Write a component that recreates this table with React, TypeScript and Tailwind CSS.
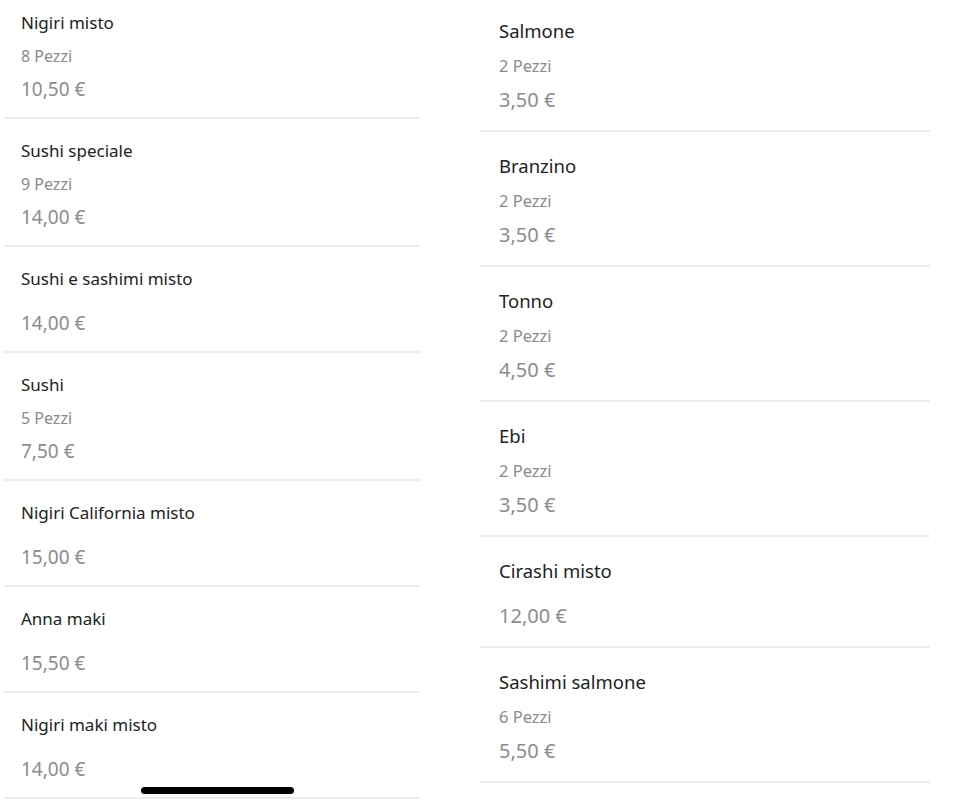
import React from "react";

type Item = { name: string; pezzi?: string; price: string };

const left: Item[] = [
  { name: "Nigiri misto", pezzi: "8 Pezzi", price: "10,50 €" },
  { name: "Sushi speciale", pezzi: "9 Pezzi", price: "14,00 €" },
  { name: "Sushi e sashimi misto", price: "14,00 €" },
  { name: "Sushi", pezzi: "5 Pezzi", price: "7,50 €" },
  { name: "Nigiri California misto", price: "15,00 €" },
  { name: "Anna maki", price: "15,50 €" },
  { name: "Nigiri maki misto", price: "14,00 €" },
];

const right: Item[] = [
  { name: "Salmone", pezzi: "2 Pezzi", price: "3,50 €" },
  { name: "Branzino", pezzi: "2 Pezzi", price: "3,50 €" },
  { name: "Tonno", pezzi: "2 Pezzi", price: "4,50 €" },
  { name: "Ebi", pezzi: "2 Pezzi", price: "3,50 €" },
  { name: "Cirashi misto", price: "12,00 €" },
  { name: "Sashimi salmone", pezzi: "6 Pezzi", price: "5,50 €" },
];

function LeftRow({ item }: { item: Item }) {
  return (
    <div className="border-b-2 border-[#ededed] pl-[18px] pt-[20px] pb-[16px]">
      <div className="text-[17px] leading-[24px] text-[#222]">{item.name}</div>
      {item.pezzi && (
        <div className="mt-[11px] text-[16px] leading-[20px] text-[#8a8a8a]">{item.pezzi}</div>
      )}
      <div className={`${item.pezzi ? "mt-[11px]" : "mt-[20px]"} text-[19px] leading-[24px] text-[#8c8c8c]`}>
        {item.price}
      </div>
    </div>
  );
}

function RightRow({ item }: { item: Item }) {
  return (
    <div className="border-b-2 border-[#ededed] pl-[19px] pt-[21px] pb-[17px]">
      <div className="text-[18.5px] leading-[26px] text-[#222]">{item.name}</div>
      {item.pezzi && (
        <div className="mt-[11px] text-[16.5px] leading-[22px] text-[#8a8a8a]">{item.pezzi}</div>
      )}
      <div className={`${item.pezzi ? "mt-[10px]" : "mt-[19px]"} text-[20px] leading-[26px] text-[#8c8c8c]`}>
        {item.price}
      </div>
    </div>
  );
}

export default function App() {
  return (
    <div
      className="relative h-[805px] w-[960px] overflow-hidden bg-white"
      style={{ fontFamily: '"Noto Sans", sans-serif' }}
    >
      <div className="flex items-start">
        <div className="ml-[3px] mt-[-9px] w-[417px] flex flex-col">
          {left.map((it) => (
            <LeftRow key={it.name} item={it} />
          ))}
        </div>
        <div className="ml-[60px] mt-[-3px] w-[450px] flex flex-col">
          {right.map((it) => (
            <RightRow key={it.name} item={it} />
          ))}
        </div>
      </div>
      <div className="absolute left-[141px] top-[787px] h-[7px] w-[153px] rounded-full bg-black" />
    </div>
  );
}
